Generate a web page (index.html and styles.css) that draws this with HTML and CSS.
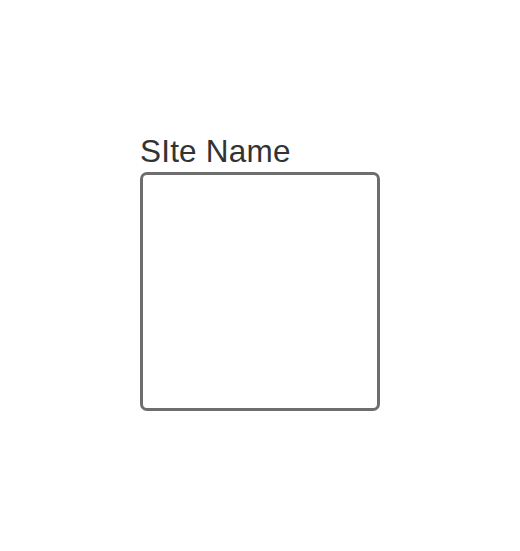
FILE: index.html
```html
<!DOCTYPE html>
<html>
<head>
<meta charset="utf-8">
<link rel="stylesheet" href="styles.css">
</head>
<body>
<div class="page">
  <div class="field">
    <label class="label">SIte Name</label>
    <div class="box"></div>
  </div>
</div>
</body>
</html>
```

FILE: styles.css
```css
html, body {
  margin: 0;
  padding: 0;
  background: #ffffff;
}
.page {
  width: 520px;
  height: 551px;
  display: flex;
  justify-content: center;
  padding-top: 134px;
  box-sizing: border-box;
}
.field {
  width: 240px;
  display: flex;
  flex-direction: column;
}
.label {
  font-family: "Liberation Sans", Arial, sans-serif;
  font-size: 31.5px;
  line-height: 34px;
  letter-spacing: 0.2px;
  color: #333333;
  margin-bottom: 4px;
}
.box {
  width: 240px;
  height: 239px;
  box-sizing: border-box;
  border: 3px solid #6e6e6e;
  border-radius: 7px;
  background: #ffffff;
}
```
